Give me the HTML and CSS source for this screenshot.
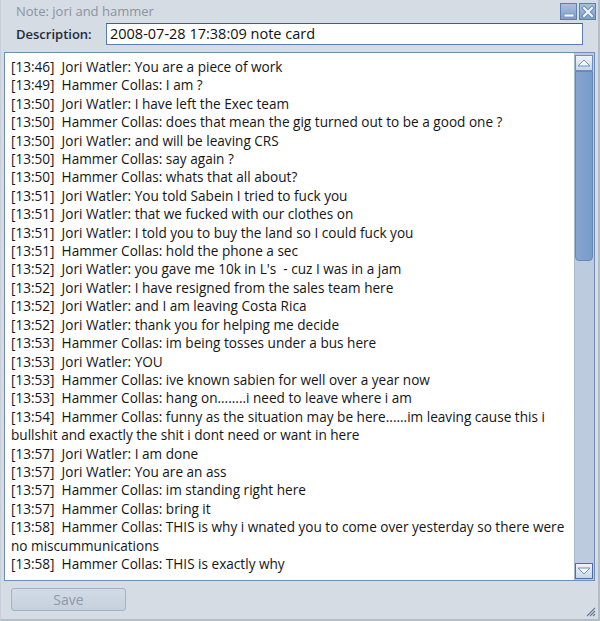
FILE: index.html
```html
<!DOCTYPE html>
<html>
<head>
<meta charset="utf-8">
<link rel="stylesheet" href="styles.css">
</head>
<body>
<div class="window">
  <div class="titlebar">
    <span class="title">Note: jori and hammer</span>
    <div class="winbtns">
      <span class="wbtn"><svg width="14" height="14" viewBox="0 0 14 14"><rect x="2" y="9" width="10" height="3" fill="#f4f7fb" stroke="#6d8fbd" stroke-width="0.8"/></svg></span>
      <span class="wbtn"><svg width="14" height="14" viewBox="0 0 14 14"><path d="M3 3 L11 11 M11 3 L3 11" stroke="#6d8fbd" stroke-width="4" stroke-linecap="square"/><path d="M3 3 L11 11 M11 3 L3 11" stroke="#f4f7fb" stroke-width="2" stroke-linecap="square"/></svg></span>
    </div>
  </div>
  <div class="descrow">
    <label class="desclabel">Description:</label>
    <div class="descinput">2008-07-28 17:38:09 note card</div>
  </div>
  <div class="textarea">
    <div class="content">
      <div class="line">[13:46]&nbsp; Jori Watler: You are a piece of work</div>
      <div class="line">[13:49]&nbsp; Hammer Collas: I am ?</div>
      <div class="line">[13:50]&nbsp; Jori Watler: I have left the Exec team</div>
      <div class="line">[13:50]&nbsp; Hammer Collas: does that mean the gig turned out to be a good one ?</div>
      <div class="line">[13:50]&nbsp; Jori Watler: and will be leaving CRS</div>
      <div class="line">[13:50]&nbsp; Hammer Collas: say again ?</div>
      <div class="line">[13:50]&nbsp; Hammer Collas: whats that all about?</div>
      <div class="line">[13:51]&nbsp; Jori Watler: You told Sabein I tried to fuck you</div>
      <div class="line">[13:51]&nbsp; Jori Watler: that we fucked with our clothes on</div>
      <div class="line">[13:51]&nbsp; Jori Watler: I told you to buy the land so I could fuck you</div>
      <div class="line">[13:51]&nbsp; Hammer Collas: hold the phone a sec</div>
      <div class="line">[13:52]&nbsp; Jori Watler: you gave me 10k in L's&nbsp; - cuz I was in a jam</div>
      <div class="line">[13:52]&nbsp; Jori Watler: I have resigned from the sales team here</div>
      <div class="line">[13:52]&nbsp; Jori Watler: and I am leaving Costa Rica</div>
      <div class="line">[13:52]&nbsp; Jori Watler: thank you for helping me decide</div>
      <div class="line">[13:53]&nbsp; Hammer Collas: im being tosses under a bus here</div>
      <div class="line">[13:53]&nbsp; Jori Watler: YOU</div>
      <div class="line">[13:53]&nbsp; Hammer Collas: ive known sabien for well over a year now</div>
      <div class="line">[13:53]&nbsp; Hammer Collas: hang on........i need to leave where i am</div>
      <div class="line">[13:54]&nbsp; Hammer Collas: funny as the situation may be here......im leaving cause this i bullshit and exactly the shit i dont need or want in here</div>
      <div class="line">[13:57]&nbsp; Jori Watler: I am done</div>
      <div class="line">[13:57]&nbsp; Jori Watler: You are an ass</div>
      <div class="line">[13:57]&nbsp; Hammer Collas: im standing right here</div>
      <div class="line">[13:57]&nbsp; Hammer Collas: bring it</div>
      <div class="line">[13:58]&nbsp; Hammer Collas: THIS is why i wnated you to come over yesterday so there were no miscummunications</div>
      <div class="line">[13:58]&nbsp; Hammer Collas: THIS is exactly why</div>
    </div>
    <div class="scrollbar">
      <div class="sbtn up"><svg width="14" height="10" viewBox="0 0 14 10"><path d="M1 8 L7 2 L13 8 Z" fill="#f6f8fb" stroke="#6d8fbd" stroke-width="1"/></svg></div>
      <div class="track">
        <div class="thumb"></div>
      </div>
      <div class="sbtn down"><svg width="14" height="10" viewBox="0 0 14 10"><path d="M1 2 L7 8 L13 2 Z" fill="#f6f8fb" stroke="#6d8fbd" stroke-width="1"/></svg></div>
    </div>
  </div>
  <div class="footer">
    <button class="savebtn">Save</button>
    <svg class="grip" width="12" height="12" viewBox="0 0 12 12"><path d="M11 3 L3 11 M11 6 L6 11 M11 9 L9 11" stroke="#6a7f9c" stroke-width="1.2"/></svg>
  </div>
</div>
</body>
</html>
```

FILE: styles.css
```css
html, body {
  margin: 0;
  padding: 0;
  background: #d6dce4;
}
.window {
  width: 600px;
  height: 621px;
  box-sizing: border-box;
  background: #d6dce4;
  border-right: 2px solid #b4bcc6;
  border-bottom: 2px solid #b4bcc6;
  border-left: 1px solid #c8cfd8;
  display: flex;
  flex-direction: column;
  font-family: "Open Sans", "DejaVu Sans", sans-serif;
  position: relative;
}
.titlebar {
  height: 21px;
  display: flex;
  align-items: center;
  justify-content: space-between;
  padding: 0 2px 0 15px;
}
.title {
  color: #8a939e;
  font-size: 13px;
}
.winbtns {
  display: flex;
  gap: 2px;
  padding-top: 2px;
}
.wbtn {
  width: 17px;
  height: 17px;
  box-sizing: border-box;
  border: 1px solid #5e80b0;
  background: linear-gradient(#a9c0de, #7f9ecb);
  display: flex;
  align-items: center;
  justify-content: center;
}
.descrow {
  display: flex;
  align-items: center;
  height: 26px;
  padding: 0 0 0 15px;
}
.desclabel {
  color: #1e2b3c;
  font-size: 13px;
  font-weight: 600;
  width: 90px;
}
.descinput {
  width: 477px;
  height: 22px;
  box-sizing: border-box;
  border: 1px solid #5a7eb4;
  border-top-color: #3e5f92;
  background: #fff;
  font-size: 14.5px;
  color: #111;
  padding: 0 3px;
  line-height: 20px;
}
.textarea {
  margin: 5px 3px 0 3px;
  height: 529px;
  box-sizing: border-box;
  border: 1px solid #6f8db8;
  background: #fff;
  display: flex;
}
.content {
  flex: 1;
  padding: 5px 0 0 6px;
  font-size: 13.6px;
  line-height: 18.4px;
  color: #151515;
  overflow: hidden;
}
.scrollbar {
  width: 18px;
  display: flex;
  flex-direction: column;
  background: #bccbdd;
  border-left: 1px solid #a8b8cc;
  padding-right: 1px;
}
.sbtn {
  height: 16px;
  box-sizing: border-box;
  border: 1px solid #6d8fbd;
  background: linear-gradient(#eef3f9, #c9d7e8);
  display: flex;
  align-items: center;
  justify-content: center;
  margin-top: 2px;
}
.sbtn.down {
  margin-top: 0;
  margin-bottom: 1px;
  border-color: #4d6e9e;
}
.track {
  flex: 1;
  display: flex;
  flex-direction: column;
}
.thumb {
  height: 190px;
  box-sizing: border-box;
  background: linear-gradient(90deg, #86a6d0, #7a9bc9);
  border: 1px solid #6887b4;
  border-radius: 0 0 4px 4px;
}
.footer {
  flex: 1;
  display: flex;
  align-items: flex-start;
  justify-content: space-between;
  padding: 7px 0 0 10px;
  position: relative;
}
.savebtn {
  width: 115px;
  height: 23px;
  border: 1px solid #9fb3cb;
  border-radius: 3px;
  background: linear-gradient(#d2dbe6, #c6d1de);
  color: #8d99a8;
  font-family: "Open Sans", "DejaVu Sans", sans-serif;
  font-size: 14px;
  padding: 0;
}
.grip {
  position: absolute;
  right: 2px;
  bottom: 2px;
}
```
